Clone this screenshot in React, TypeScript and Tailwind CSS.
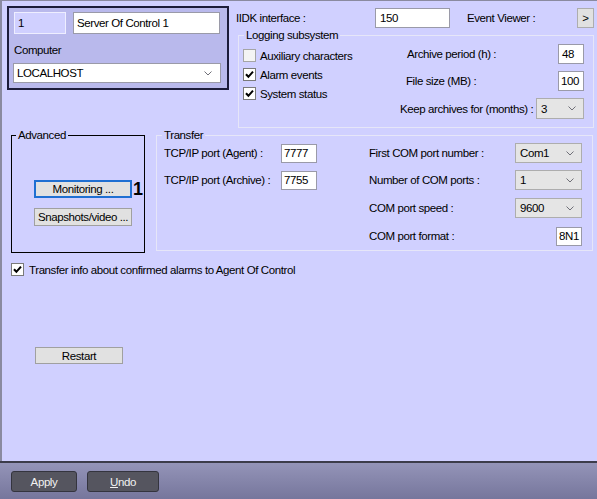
function Chevron() {
  return (
    <svg width="8" height="5" viewBox="0 0 8 5" className="shrink-0">
      <path d="M0.5 0.5 L4 4 L7.5 0.5" fill="none" stroke="#707078" strokeWidth="1" />
    </svg>
  );
}

function Check({ checked }: { checked?: boolean }) {
  return (
    <div
      className={
        checked
          ? 'w-[13px] h-[13px] shrink-0 border border-[#7a7a7a] bg-white flex items-center justify-center'
          : 'w-[13px] h-[13px] shrink-0 border border-[#a5a5a5] bg-[#f4f4f4]'
      }
    >
      {checked && (
        <svg width="9" height="9" viewBox="0 0 9 9">
          <path d="M1 4.2 L3.4 6.8 L8 1.6" fill="none" stroke="#000" strokeWidth="2" />
        </svg>
      )}
    </div>
  );
}

function Legend({ children, left }: { children: string; left: string }) {
  return (
    <span className={`absolute -top-[8px] ${left} px-[2px] bg-[#d0d0ff] leading-[14px]`}>{children}</span>
  );
}

export default function App() {
  return (
    <div className="w-[597px] h-[499px] flex flex-col bg-[#d0d0ff] text-[11.5px] tracking-[-0.4px] leading-[14px] whitespace-nowrap text-black font-['Liberation_Sans',Arial,sans-serif] overflow-hidden">
      <div className="flex-1 flex flex-col border-l-2 border-t border-[#8a8aa0]">
        {/* top section */}
        <div className="flex items-start">
          <div className="ml-[5px] mt-[5px] w-[222px] h-[84px] border-2 border-[#1c1c3a] bg-[#b9b9ec] pl-[4px] pt-[4px]">
            <div className="flex gap-[7px]">
              <div className="ml-[1px] w-[52px] h-[22px] bg-[#d0d0ff] border border-[#eeeeff] pl-[3px] flex items-center">1</div>
              <div className="w-[147px] h-[22px] bg-white border border-[#9a9aa8] pl-[3px] flex items-center">Server Of Control 1</div>
            </div>
            <div className="mt-[9px] ml-[1px]">Computer</div>
            <div className="mt-[6px] w-[208px] h-[20px] bg-white border border-[#9a9aa8] pl-[3px] pr-[8px] flex items-center justify-between">
              <span>LOCALHOST</span>
              <Chevron />
            </div>
          </div>

          <div className="ml-[7px] w-[358px]">
            <div className="mt-[7px] h-[20px] flex items-center">
              <span className="w-[139px]">IIDK interface :</span>
              <div className="w-[75px] h-[20px] bg-white border border-[#9a9aa8] pl-[4px] flex items-center">150</div>
              <span className="ml-[17px]">Event Viewer :</span>
              <div className="ml-auto w-[17px] h-[20px] bg-[#e1e1e1] border border-[#adadad] flex items-center justify-center">&gt;</div>
            </div>

            <div className="relative mt-[7px] ml-[2px] w-[356px] h-[93px] border border-[#e6e6f8] flex">
              <Legend left="left-[5px]">Logging subsystem</Legend>
              <div className="w-[161px] pl-[4px] pt-[10px]">
                <div className="h-[19px] flex items-center gap-[4px]">
                  <Check />
                  <span>Auxiliary characters</span>
                </div>
                <div className="h-[19px] flex items-center gap-[4px]">
                  <Check checked />
                  <span>Alarm events</span>
                </div>
                <div className="h-[19px] flex items-center gap-[4px]">
                  <Check checked />
                  <span>System status</span>
                </div>
              </div>
              <div className="w-[184px] pt-[8px]">
                <div className="h-[20px] flex items-center">
                  <span className="ml-[7px]">Archive period (h) :</span>
                  <div className="ml-auto w-[26px] h-[20px] bg-white border border-[#9a9aa8] pl-[3px] flex items-center">48</div>
                </div>
                <div className="mt-[7px] h-[20px] flex items-center">
                  <span className="ml-[6px]">File size (MB) :</span>
                  <div className="ml-auto w-[26px] h-[20px] bg-white border border-[#9a9aa8] pl-[2px] flex items-center">100</div>
                </div>
                <div className="mt-[7px] h-[21px] flex items-center">
                  <span>Keep archives for (months) :</span>
                  <div className="ml-auto w-[48px] h-[21px] bg-[#e5e5e5] border border-[#adadad] pl-[4px] pr-[7px] flex items-center justify-between">
                    <span>3</span>
                    <Chevron />
                  </div>
                </div>
              </div>
            </div>
          </div>
        </div>

        {/* middle section */}
        <div className="mt-[7px] flex items-start">
          <div className="relative ml-[9px] w-[134px] h-[118px] border border-black pl-[22px] pt-[44px]">
            <Legend left="left-[4px]">Advanced</Legend>
            <div className="flex items-center">
              <div className="w-[98px] h-[18px] bg-[#e1e1e1] border-2 border-[#1f6fd2] flex items-center justify-center">Monitoring ...</div>
              <span className="ml-[1px] text-[18px] leading-[18px] tracking-normal font-bold">1</span>
            </div>
            <div className="mt-[10px] w-[98px] h-[18px] bg-[#e1e1e1] border border-[#a0a0a0] flex items-center justify-center">Snapshots/video ...</div>
          </div>

          <div className="relative ml-[11px] w-[437px] h-[116px] border border-[#e6e6f8] flex pl-[7px] pt-[7px]">
            <Legend left="left-[5px]">Transfer</Legend>
            <div className="w-[153px]">
              <div className="h-[20px] flex items-center">
                <span className="w-[117px]">TCP/IP port (Agent) :</span>
                <div className="w-[36px] h-[19px] bg-white border border-[#9a9aa8] pl-[2px] flex items-center">7777</div>
              </div>
              <div className="mt-[7px] h-[20px] flex items-center">
                <span className="w-[117px]">TCP/IP port (Archive) :</span>
                <div className="w-[36px] h-[19px] bg-white border border-[#9a9aa8] pl-[2px] flex items-center">7755</div>
              </div>
            </div>
            <div className="ml-[52px] w-[213px]">
              <div className="h-[20px] flex items-center">
                <span className="w-[146px]">First COM port number :</span>
                <div className="w-[67px] h-[20px] bg-[#e5e5e5] border border-[#adadad] pl-[4px] pr-[7px] flex items-center justify-between">
                  <span>Com1</span>
                  <Chevron />
                </div>
              </div>
              <div className="mt-[7px] h-[20px] flex items-center">
                <span className="w-[146px]">Number of COM ports :</span>
                <div className="w-[67px] h-[20px] bg-[#e5e5e5] border border-[#adadad] pl-[4px] pr-[7px] flex items-center justify-between">
                  <span>1</span>
                  <Chevron />
                </div>
              </div>
              <div className="mt-[8px] h-[20px] flex items-center">
                <span className="w-[146px]">COM port speed :</span>
                <div className="w-[67px] h-[20px] bg-[#e5e5e5] border border-[#adadad] pl-[4px] pr-[7px] flex items-center justify-between">
                  <span>9600</span>
                  <Chevron />
                </div>
              </div>
              <div className="mt-[8px] h-[20px] flex items-center">
                <span>COM port format :</span>
                <div className="ml-auto w-[26px] h-[19px] bg-white border border-[#9a9aa8] pl-[2px] flex items-center">8N1</div>
              </div>
            </div>
          </div>
        </div>

        <div className="mt-[10px] ml-[9px] h-[13px] flex items-center gap-[5px]">
          <Check checked />
          <span>Transfer info about confirmed alarms to Agent Of Control</span>
        </div>

        <div className="mt-[71px] ml-[33px] w-[88px] h-[17px] bg-[#e1e1e1] border border-[#a0a0a0] flex items-center justify-center">Restart</div>
      </div>

      <div className="h-[2px] bg-[#3c3c4a]" />
      <div className="h-[36px] bg-gradient-to-b from-[#9494b8] to-[#76769c] flex items-start pl-[11px] pt-[8px] gap-[10px]">
        <div className="w-[66px] h-[21px] rounded-[3px] bg-[#55555f] border border-[#34343e] text-[#f2f2f2] flex items-center justify-center">Apply</div>
        <div className="w-[72px] h-[21px] rounded-[3px] bg-[#55555f] border border-[#34343e] text-[#f2f2f2] flex items-center justify-center">
          <span><span className="underline">U</span>ndo</span>
        </div>
      </div>
    </div>
  );
}
